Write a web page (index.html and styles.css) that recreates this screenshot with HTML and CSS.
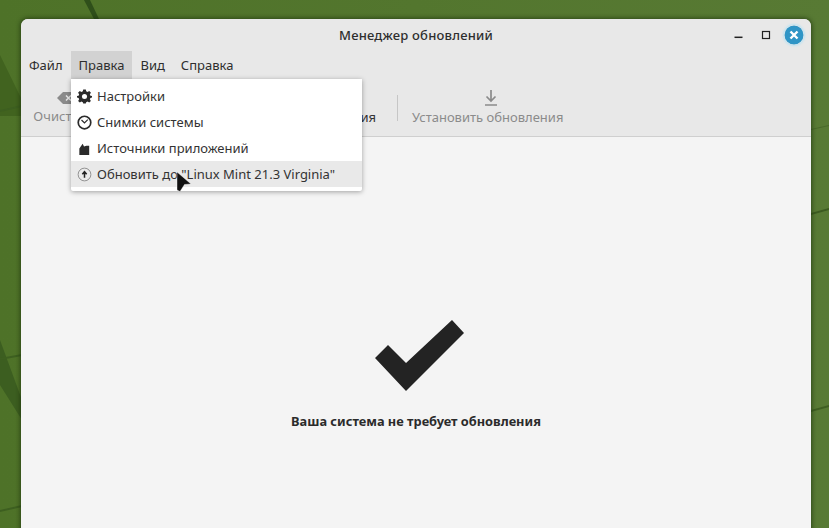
FILE: index.html
```html
<!DOCTYPE html>
<html lang="ru">
<head>
<meta charset="utf-8">
<title>Менеджер обновлений</title>
<link rel="stylesheet" href="styles.css">
</head>
<body>
<svg class="wallpaper" viewBox="0 0 829 528" preserveAspectRatio="none" aria-hidden="true">
  <defs>
    <linearGradient id="wall" x1="0" x2="1" y1="0" y2="0">
      <stop offset="0" stop-color="#4e7228"/>
      <stop offset="1" stop-color="#587a34"/>
    </linearGradient>
  </defs>
  <rect width="829" height="528" fill="url(#wall)"/>
  <path d="M84 0H90L99 19H94Z" fill="#2f4f1a"/>
  <path d="M0 55L22 100V116H0Z" fill="#41631f"/>
  <path d="M0 110L22 105V107L0 112Z" fill="#3d5f20"/>
  <path d="M0 340L22 400V420L0 385Z" fill="#3c5e20"/>
  <path d="M0 358L22 354V356L0 360Z" fill="#3d5f20"/>
  <path d="M0 510L22 505V507L0 512Z" fill="#3d5f20"/>
  <path d="M811 129L829 125V126L811 130Z" fill="#48692a"/>
  <path d="M811 213L829 208V210L811 215Z" fill="#3c5b20"/>
  <path d="M811 410L829 405V407L811 412Z" fill="#3f5f22"/>
</svg>
<main class="window">
  <header class="titlebar">
    <h1 class="title">Менеджер обновлений</h1>
    <div class="controls">
      <svg class="ctl" viewBox="0 0 16 16"><path d="M2.500 10.300H10.500" stroke="#222" stroke-width="1.500"/></svg>
      <svg class="ctl" viewBox="0 0 16 16"><rect x="4.500" y="4.500" width="7" height="7" fill="none" stroke="#222" stroke-width="1.200"/></svg>
      <svg class="ctl-close" viewBox="0 0 20 20"><circle cx="10" cy="10" r="9.500" fill="#2f95c6"/><path d="M6.500 6.500L13.500 13.500M13.500 6.500L6.500 13.500" stroke="#fff" stroke-width="2.400"/></svg>
    </div>
  </header>
  <nav class="menubar">
    <span class="menu-item">Файл</span>
    <span class="menu-item is-open">Правка</span>
    <span class="menu-item">Вид</span>
    <span class="menu-item">Справка</span>
  </nav>
  <div class="toolbar">
    <div class="tool tool-clear">
      <svg class="tool-icon" viewBox="0 0 20 16"><path d="M1 8L7 2H19V14H7Z" fill="#8b8b8b"/><path d="M10 5.500L15 10.500M15 5.500L10 10.500" stroke="#e8e8e8" stroke-width="1.500"/></svg>
      <span>Очистить</span>
    </div>
    <div class="tool tool-refresh"><span>Обновления</span></div>
    <div class="tool-sep"></div>
    <div class="tool">
      <svg class="tool-icon tool-install" viewBox="0 0 16 18"><path d="M8 1V12M3.500 7.500L8 12L12.500 7.500M2 16H14" fill="none" stroke="#8a8a8a" stroke-width="1.700"/></svg>
      <span>Установить обновления</span>
    </div>
  </div>
  <section class="status">
    <svg class="check" viewBox="0 0 90 72"><path d="M0 38L13 25L31 43L77 0L89 13L31 71Z" fill="#232323"/></svg>
    <p class="status-text">Ваша система не требует обновления</p>
  </section>
  <div class="dropdown">
    <div class="drop-row">
      <svg class="drop-icon" viewBox="0 0 16 16"><path d="M6.600 1H9.400L9.800 3L11.300 3.700L13 2.500L14.900 4.500L13.700 6.200L14.300 7.600L16 8L16 9.500L14.300 10L13.700 11.500L14.800 13.300L13 15L11.300 13.800L9.800 14.500L9.400 16H6.600L6.200 14.500L4.700 13.800L3 15L1.200 13.300L2.300 11.500L1.700 10L0 9.500V8L1.700 7.600L2.300 6.200L1.100 4.500L3 2.500L4.700 3.700L6.200 3Z" transform="translate(0 -.5)" fill="#2b2b2b"/><circle cx="8" cy="8" r="2.700" fill="#fff"/></svg>
      <span>Настройки</span>
    </div>
    <div class="drop-row">
      <svg class="drop-icon" viewBox="0 0 16 16"><circle cx="8" cy="8" r="6.700" fill="none" stroke="#2b2b2b" stroke-width="1.800"/><path d="M4.800 5.300L8 8.500L11.500 5" fill="none" stroke="#2b2b2b" stroke-width="1.300"/></svg>
      <span>Снимки системы</span>
    </div>
    <div class="drop-row">
      <svg class="drop-icon" viewBox="0 0 16 16"><path d="M2.500 8L6 3L7.500 5.800L10 5H13V15H2.500Z" fill="#2b2b2b"/></svg>
      <span>Источники приложений</span>
    </div>
    <div class="drop-row is-hover">
      <svg class="drop-icon" viewBox="0 0 16 16"><circle cx="8" cy="8" r="6.800" fill="none" stroke="#8c8c8c" stroke-width="1"/><path d="M8 11.500V6M5.700 7.800L8 5L10.300 7.800" fill="none" stroke="#222" stroke-width="1.600"/></svg>
      <span>Обновить до "Linux Mint 21.3 Virginia"</span>
    </div>
  </div>
  <svg class="cursor" viewBox="0 0 16 20" aria-hidden="true"><path d="M1 0L15 12L8.500 12.500L4 19.500L1 18Z" fill="#111" stroke="#fff" stroke-width=".4"/></svg>
</main>
</body>
</html>
```
FILE: styles.css
```css
* { box-sizing: border-box; }
html, body { margin: 0; height: 100%; }
body {
  position: relative;
  width: 829px;
  height: 528px;
  overflow: hidden;
  padding: 19px 18px 0 21px;
  font-family: "Noto Sans", "DejaVu Sans", sans-serif;
  font-size: 13px;
  color: #2e2e2e;
}
.wallpaper { position: absolute; left: 0; top: 0; width: 829px; height: 528px; }
.window {
  position: relative;
  height: 520px;
  background: #f4f4f4;
  border-radius: 7px 7px 0 0;
  box-shadow: 0 0 4px 1px rgba(25, 45, 10, .65);
  display: flex;
  flex-direction: column;
}
.titlebar {
  flex: none;
  height: 32px;
  background: #e8e8e8;
  border-radius: 7px 7px 0 0;
  display: flex;
  align-items: center;
  justify-content: center;
  position: relative;
}
.title { margin: 0; font-size: 13px; font-weight: 500; letter-spacing: .2px; color: #2e2e2e; }
.controls { position: absolute; right: 7px; top: 6px; display: flex; align-items: center; gap: 10px; }
.ctl { width: 16px; height: 16px; }
.ctl-close { width: 20px; height: 20px; border-radius: 50%; box-shadow: 0 0 2px 1px #bfe3f2; }
.menubar { flex: none; height: 28px; background: #e8e8e8; display: flex; }
.menu-item { padding: 0 8px; line-height: 28px; }
.is-open { background: #d2d2d2; }
.toolbar {
  flex: none;
  height: 58px;
  background: #e8e8e8;
  border-bottom: 1px solid #cfcfcf;
  display: flex;
  align-items: center;
  padding: 0 0 0 9px;
}
.tool { display: flex; flex-direction: column; align-items: center; gap: 1px; color: #8b8b8b; }
.tool-clear { width: 66px; }
.tool-icon { width: 16px; height: 18px; }
.tool-install { margin-left: 6px; }
.tool-clear .tool-icon { width: 20px; height: 16px; margin-left: 6px; }
.tool-refresh { width: 280px; align-items: flex-end; color: #333; padding-top: 19px; }
.tool-sep { width: 1px; height: 26px; background: #c6c6c6; margin: 0 14px 0 21px; }
.status { flex: 1; display: flex; flex-direction: column; align-items: center; padding: 183px 0 0 0; }
.check { width: 90px; height: 72px; margin-left: 8px; }
.status-text { margin: 20px 0 0 0; font-weight: 700; font-size: 12.800px; color: #2b2b2b; }
.dropdown {
  position: absolute;
  left: 50px;
  top: 60px;
  width: 291px;
  padding: 4px 0;
  background: #fff;
  box-shadow: 0 1px 5px rgba(0, 0, 0, .35);
  border-radius: 0 0 2px 2px;
}
.drop-row { height: 26px; display: flex; align-items: center; gap: 5px; padding-left: 6px; color: #333; }
.is-hover { background: #e9e9e9; }
.drop-icon { width: 15px; height: 15px; flex: none; }
.cursor { position: absolute; left: 155px; top: 153px; width: 16px; height: 20px; }
```
